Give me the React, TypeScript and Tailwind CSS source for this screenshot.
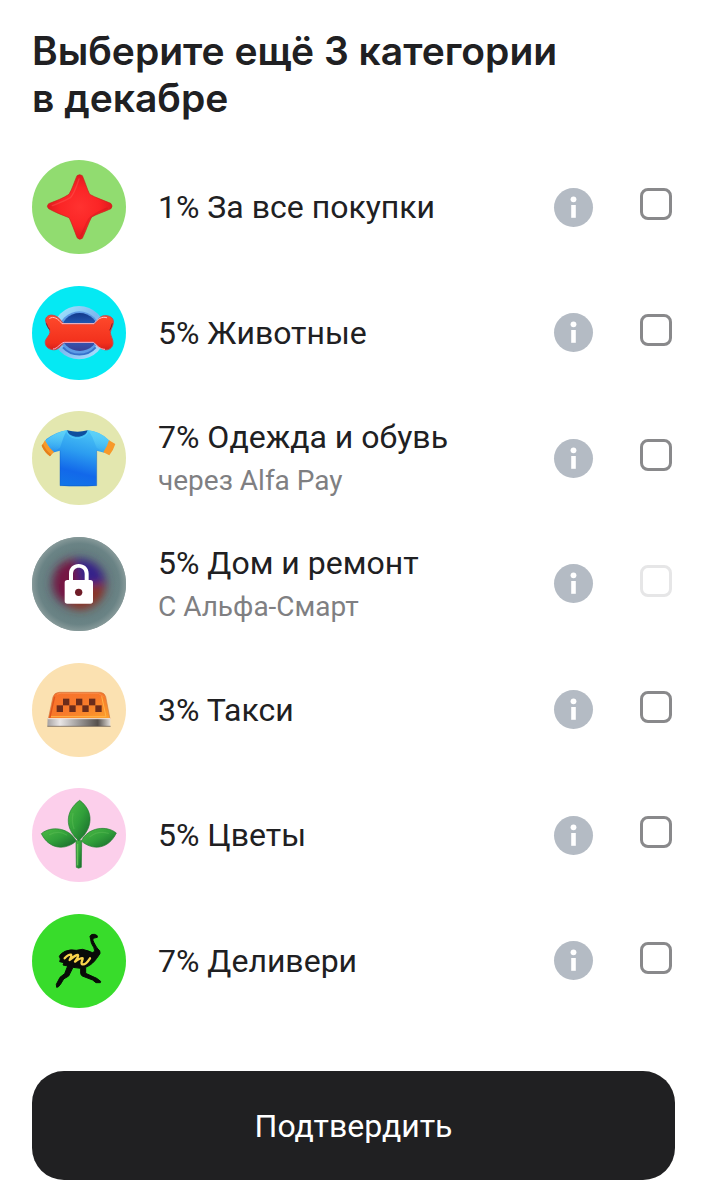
import React from "react";

interface Category {
  id: string;
  title: string;
  note?: string;
  locked?: boolean;
  bg: string;
  viewBox: string;
  icon: React.ReactNode;
}

const StarIcon = () => (
  <>
    <defs>
      <radialGradient id="star" cx="0.5" cy="0.5" r="0.5">
        <stop offset="0" stopColor="#ff3230" />
        <stop offset="0.6" stopColor="#fb2526" />
        <stop offset="1" stopColor="#e01a1e" />
      </radialGradient>
    </defs>
    <path
      d="M158 72Q166 66 174 72C182 90 188 112 196 128C214 138 238 146 259 155Q267 163 260 171C240 180 216 188 202 196C192 214 184 240 174 260Q166 266 159 259C150 238 142 212 134 198C114 190 92 182 73 171Q65 164 73 156C94 148 116 140 134 128C144 112 150 90 158 72Z"
      fill="url(#star)"
      stroke="#c6281b"
      strokeWidth="2"
    />
    <path d="M164 82C156 106 150 126 138 138C120 149 100 155 84 162" fill="none" stroke="#ff6a62" strokeWidth="4" strokeLinecap="round" opacity="0.35" />
    <path d="M248 170C224 180 206 188 194 202C184 220 178 236 170 252" fill="none" stroke="#c8141a" strokeWidth="5" strokeLinecap="round" opacity="0.35" />
  </>
);

const BoneIcon = () => (
  <>
    <defs>
      <linearGradient id="ring" x1="0" y1="0" x2="1" y2="1">
        <stop offset="0" stopColor="#a9ecff" />
        <stop offset="0.5" stopColor="#7db8f0" />
        <stop offset="1" stopColor="#b8e6ff" />
      </linearGradient>
      <linearGradient id="bowl" x1="0" y1="0" x2="0" y2="1">
        <stop offset="0" stopColor="#123a8c" />
        <stop offset="0.5" stopColor="#2f6fd0" />
        <stop offset="1" stopColor="#3a3f94" />
      </linearGradient>
      <linearGradient id="bone" x1="0" y1="0" x2="0" y2="1">
        <stop offset="0" stopColor="#ff4a2c" />
        <stop offset="0.8" stopColor="#f2301c" />
        <stop offset="1" stopColor="#d61f1c" />
      </linearGradient>
    </defs>
    <circle cx="164" cy="164" r="80" fill="url(#ring)" />
    <circle cx="165" cy="164" r="64" fill="#5d9be6" />
    <circle cx="166" cy="162" r="57" fill="url(#bowl)" />
    <path d="M116 208A66 66 0 0 0 214 208" fill="none" stroke="#3672cc" strokeWidth="6" />
    <path
      d="M64 130C62 116 74 109 87 112C101 114 107 125 115 134Q118 138 124 138H206Q211 138 214 134C221 124 228 114 240 113C254 112 268 118 267 132C267 143 260 151 258 163C258 174 267 184 266 196C265 210 252 218 240 215C225 213 219 202 212 196Q209 193 204 193H124Q118 193 114 198C106 208 98 217 85 215C70 213 61 203 63 190C65 179 76 173 77 163C77 151 66 143 64 130Z"
      fill="url(#bone)"
      stroke="#c44a50"
      strokeWidth="3"
    />
    <path d="M76 121C88 113 101 122 113 137H209C219 124 232 114 247 119" fill="none" stroke="#ffc1c5" strokeWidth="3" strokeLinecap="round" />
    <path d="M86 213C99 213 109 194 120 193H207C218 202 226 214 242 214" fill="none" stroke="#f3b4d2" strokeWidth="3" />
    <path d="M66 136Q69 147 76 155M264 136Q261 148 256 157" fill="none" stroke="#7e1b2b" strokeWidth="3" />
  </>
);

const ShirtIcon = () => (
  <>
    <defs>
      <linearGradient id="shirt" x1="0.7" y1="0" x2="0.4" y2="1">
        <stop offset="0" stopColor="#4cc6f6" />
        <stop offset="0.4" stopColor="#2c9df0" />
        <stop offset="0.75" stopColor="#1268ea" />
        <stop offset="1" stopColor="#1174e8" />
      </linearGradient>
      <linearGradient id="sleeve" x1="0" y1="0" x2="0" y2="1">
        <stop offset="0" stopColor="#5fd2f8" />
        <stop offset="1" stopColor="#5fd2f8" stopOpacity="0" />
      </linearGradient>
    </defs>
    <path
      d="M127 80Q98 84 66 106L62 112L84 147L107 141V246Q162 249 217 246V141L240 147L256 112L250 106Q226 84 192 80Q160 92 127 80Z"
      fill="url(#shirt)"
    />
    <path d="M127 80Q98 84 62 112L84 147L107 132L118 100Z" fill="url(#sleeve)" />
    <path d="M192 80Q226 84 256 112L240 147L217 132L204 100Z" fill="url(#sleeve)" />
    <path d="M107 141V246H217V141" fill="none" stroke="#0a58bd" strokeWidth="2" opacity="0.6" />
    <path d="M128 80C134 106 184 106 190 80Q160 88 128 80Z" fill="#0e4f9e" />
    <path d="M127 81C130 111 187 111 192 81" fill="none" stroke="#52cdf8" strokeWidth="3" />
    <path d="M62 110Q71 130 89 145L77 158Q60 145 52 126Z" fill="#f7992a" />
    <path d="M254 110L273 121Q267 140 255 155L237 146Q249 129 254 110Z" fill="#f7992a" />
    <path d="M52 126Q60 145 77 158L81 153Q65 141 56 121Z" fill="#e57f1a" />
  </>
);

const LockIcon = () => (
  <>
    <defs>
      <radialGradient id="haze" gradientUnits="userSpaceOnUse" cx="164" cy="162" r="141">
        <stop offset="0.5" stopColor="#617b7d" />
        <stop offset="0.86" stopColor="#6a8385" />
        <stop offset="1" stopColor="#869999" />
      </radialGradient>
      <filter id="blur" x="-50%" y="-50%" width="200%" height="200%">
        <feGaussianBlur stdDeviation="12" />
      </filter>
    </defs>
    <rect x="20" y="18" width="290" height="290" fill="url(#haze)" />
    <g filter="url(#blur)">
      <ellipse cx="164" cy="160" rx="82" ry="76" fill="#57405f" />
      <path d="M88 164Q88 96 150 86L165 160L130 224Q88 204 88 164Z" fill="#741343" />
      <path d="M155 86Q234 92 240 158L165 170Z" fill="#35208a" />
      <path d="M165 168L242 158Q242 229 165 240L126 226Z" fill="#8a3228" />
    </g>
    <path
      fillRule="evenodd"
      d="M134 150V131C134 113 147 102 163 102C180 102 193 113 193 131V150H198Q206 150 206 158V213Q206 221 198 221H129Q121 221 121 213V158Q121 150 129 150ZM146 150H181V132C181 120 174 113 163 113C153 113 146 120 146 132Z"
      fill="#fff"
    />
    <circle cx="163" cy="187" r="11" fill="#6f1c28" />
  </>
);

const checkerCells = [
  [116, 131], [155, 131], [194, 131],
  [97, 151], [135, 151], [174, 151], [213, 151],
];

const TaxiIcon = () => (
  <>
    <defs>
      <linearGradient id="taxi" x1="0" y1="0" x2="1" y2="1">
        <stop offset="0" stopColor="#f8712c" />
        <stop offset="0.5" stopColor="#f7792a" />
        <stop offset="1" stopColor="#fda22c" />
      </linearGradient>
      <linearGradient id="metal" x1="0" y1="0" x2="1" y2="0">
        <stop offset="0" stopColor="#a5a1a1" />
        <stop offset="0.2" stopColor="#e9e6e6" />
        <stop offset="0.5" stopColor="#9c9998" />
        <stop offset="0.8" stopColor="#56504c" />
        <stop offset="1" stopColor="#e4dfda" />
      </linearGradient>
    </defs>
    <path d="M72 192L86 126Q90 113 104 112H228Q240 113 244 125L257 192Z" fill="url(#taxi)" stroke="#d07a45" strokeWidth="2" />
    <path d="M98 118Q103 115 112 115H222L238 125" fill="none" stroke="#f98a48" strokeWidth="3" />
    <path d="M80 185H245L232 124" fill="none" stroke="#ffb347" strokeWidth="3" />
    <path d="M76 190L91 125" fill="none" stroke="#dd531d" strokeWidth="4" />
    {checkerCells.map(([x, y]) => (
      <rect key={`${x}-${y}`} x={x} y={y} width="19" height="20" fill="#6b2c1b" />
    ))}
    <path d="M70 190H258V214H69Z" fill="url(#metal)" />
    <path d="M70 191H258" stroke="#f6e5d8" strokeWidth="3" />
    <path d="M69 214H259" stroke="#5d5148" strokeWidth="2" />
  </>
);

const LeafIcon = () => (
  <>
    <defs>
      <linearGradient id="leaf" x1="0" y1="0" x2="1" y2="1">
        <stop offset="0" stopColor="#4dbb45" />
        <stop offset="0.5" stopColor="#319f3a" />
        <stop offset="1" stopColor="#15662a" />
      </linearGradient>
    </defs>
    <g fill="url(#leaf)" stroke="#237b30" strokeWidth="2">
      <path d="M155 182Q163 172 172 182L171 260Q163 265 156 260Z" />
      <path d="M51 159C78 136 132 138 156 181C123 210 75 207 51 159Z" />
      <path d="M276 157C248 134 193 138 171 181C204 210 252 207 276 157Z" />
      <path d="M166 59C122 91 120 143 163 180C207 143 209 91 166 59Z" />
    </g>
    <path d="M146 99Q141 122 149 144M76 162Q103 148 127 163M197 168Q221 149 252 158" fill="none" stroke="#7bd06c" strokeWidth="4" strokeLinecap="round" opacity="0.25" />
    <path d="M160 190V254" stroke="#69c55a" strokeWidth="3" />
  </>
);

const OstrichIcon = () => (
  <>
    <path
      d="M197 91Q200 83 210 85Q222 88 219 94L206 97Q204 102 209 110C214 119 218 128 226 134Q230 142 222 150C215 160 208 170 196 178L184 184L184 202L217 217L229 226L228 230L215 230L205 222L174 210Q169 207 169 202V187L146 184L133 210L118 219L109 234Q102 245 97 244L96 235L107 214L121 203L130 180L116 177L119 170L106 167Q111 159 105 151Q108 143 122 136Q139 129 156 133L174 130Q192 134 207 141Q214 133 208 124Q199 111 199 101Z"
      fill="#090b08"
      stroke="#090b08"
      strokeWidth="3"
      strokeLinejoin="round"
    />
    <path
      d="M121 157Q132 145 140 146Q143 149 136 162Q154 146 161 147Q164 150 152 167Q170 155 175 157C176 162 167 172 174 175C182 177 190 168 197 157"
      fill="none"
      stroke="#f7d34b"
      strokeWidth="7"
      strokeLinecap="round"
      strokeLinejoin="round"
    />
  </>
);

const categories: Category[] = [
  { id: "all", title: "1% За все покупки", bg: "bg-[#91dc70]", viewBox: "23 25 282 282", icon: <StarIcon /> },
  { id: "pets", title: "5% Животные", bg: "bg-[#05e9f3]", viewBox: "23 24 282 282", icon: <BoneIcon /> },
  { id: "clothes", title: "7% Одежда и обувь", note: "через Alfa Pay", bg: "bg-[#e3e7af]", viewBox: "23 22 282 282", icon: <ShirtIcon /> },
  { id: "home", title: "5% Дом и ремонт", note: "С Альфа-Смарт", locked: true, bg: "bg-[#869999]", viewBox: "23 21 282 282", icon: <LockIcon /> },
  { id: "taxi", title: "3% Такси", bg: "bg-[#fbe1b1]", viewBox: "23 24 282 282", icon: <TaxiIcon /> },
  { id: "flowers", title: "5% Цветы", bg: "bg-[#fccfeb]", viewBox: "23 22 282 282", icon: <LeafIcon /> },
  { id: "delivery", title: "7% Деливери", bg: "bg-[#38dc2b]", viewBox: "23 24 282 282", icon: <OstrichIcon /> },
];

interface CategoryRowProps {
  category: Category;
  checked: boolean;
  onToggle: () => void;
}

const CategoryRow: React.FC<CategoryRowProps> = ({ category, checked, onToggle }) => (
  <li className="flex items-center">
    <div className={`size-[94px] shrink-0 overflow-hidden rounded-full ${category.bg}`}>
      <svg viewBox={category.viewBox} className="size-full" aria-hidden="true">
        {category.icon}
      </svg>
    </div>
    <label htmlFor={category.id} className="ml-8 flex flex-1 flex-col">
      <span className="text-[32px] leading-[46px] text-[#202022]">{category.title}</span>
      {category.note && <span className="text-[28px] leading-[42px] text-[#7f7f82]">{category.note}</span>}
    </label>
    <button type="button" aria-label="Подробнее" className="size-[39px] shrink-0 rounded-full bg-[#b4bbc4]">
      <svg viewBox="0 0 39 39" className="size-full" fill="#fff" aria-hidden="true">
        <circle cx="19.5" cy="11.3" r="2.9" />
        <path d="M17.2 17H21.8V29.8H17.2Z" />
      </svg>
    </button>
    <input
      id={category.id}
      type="checkbox"
      disabled={category.locked}
      checked={checked}
      onChange={onToggle}
      className="mr-[3px] mb-[6px] ml-[47px] size-8 shrink-0 appearance-none rounded-lg border-3 border-[#89898b] checked:bg-[#202022] disabled:border-[#e6e6e7]"
    />
  </li>
);

export default function App() {
  const [selected, setSelected] = React.useState<string[]>([]);

  const toggle = (id: string) => {
    setSelected((prev) => (prev.includes(id) ? prev.filter((item) => item !== id) : [...prev, id]));
  };

  return (
    <main className="flex min-h-screen flex-col bg-white px-8 pt-[27px] pb-5 font-['Roboto','Noto_Sans',sans-serif]">
      <h1 className="font-['Inter','Noto_Sans',sans-serif] text-[39px] leading-[47px] font-semibold text-[#202022]">
        Выберите ещё 3 категории
        <br />в декабре
      </h1>
      <ul className="mt-[39px] flex flex-1 flex-col justify-between gap-4">
        {categories.map((category) => (
          <CategoryRow
            key={category.id}
            category={category}
            checked={selected.includes(category.id)}
            onToggle={() => toggle(category.id)}
          />
        ))}
      </ul>
      <button type="button" className="mt-[63px] h-[109px] shrink-0 rounded-[32px] bg-[#202022] text-[32px] text-white">
        Подтвердить
      </button>
    </main>
  );
}
